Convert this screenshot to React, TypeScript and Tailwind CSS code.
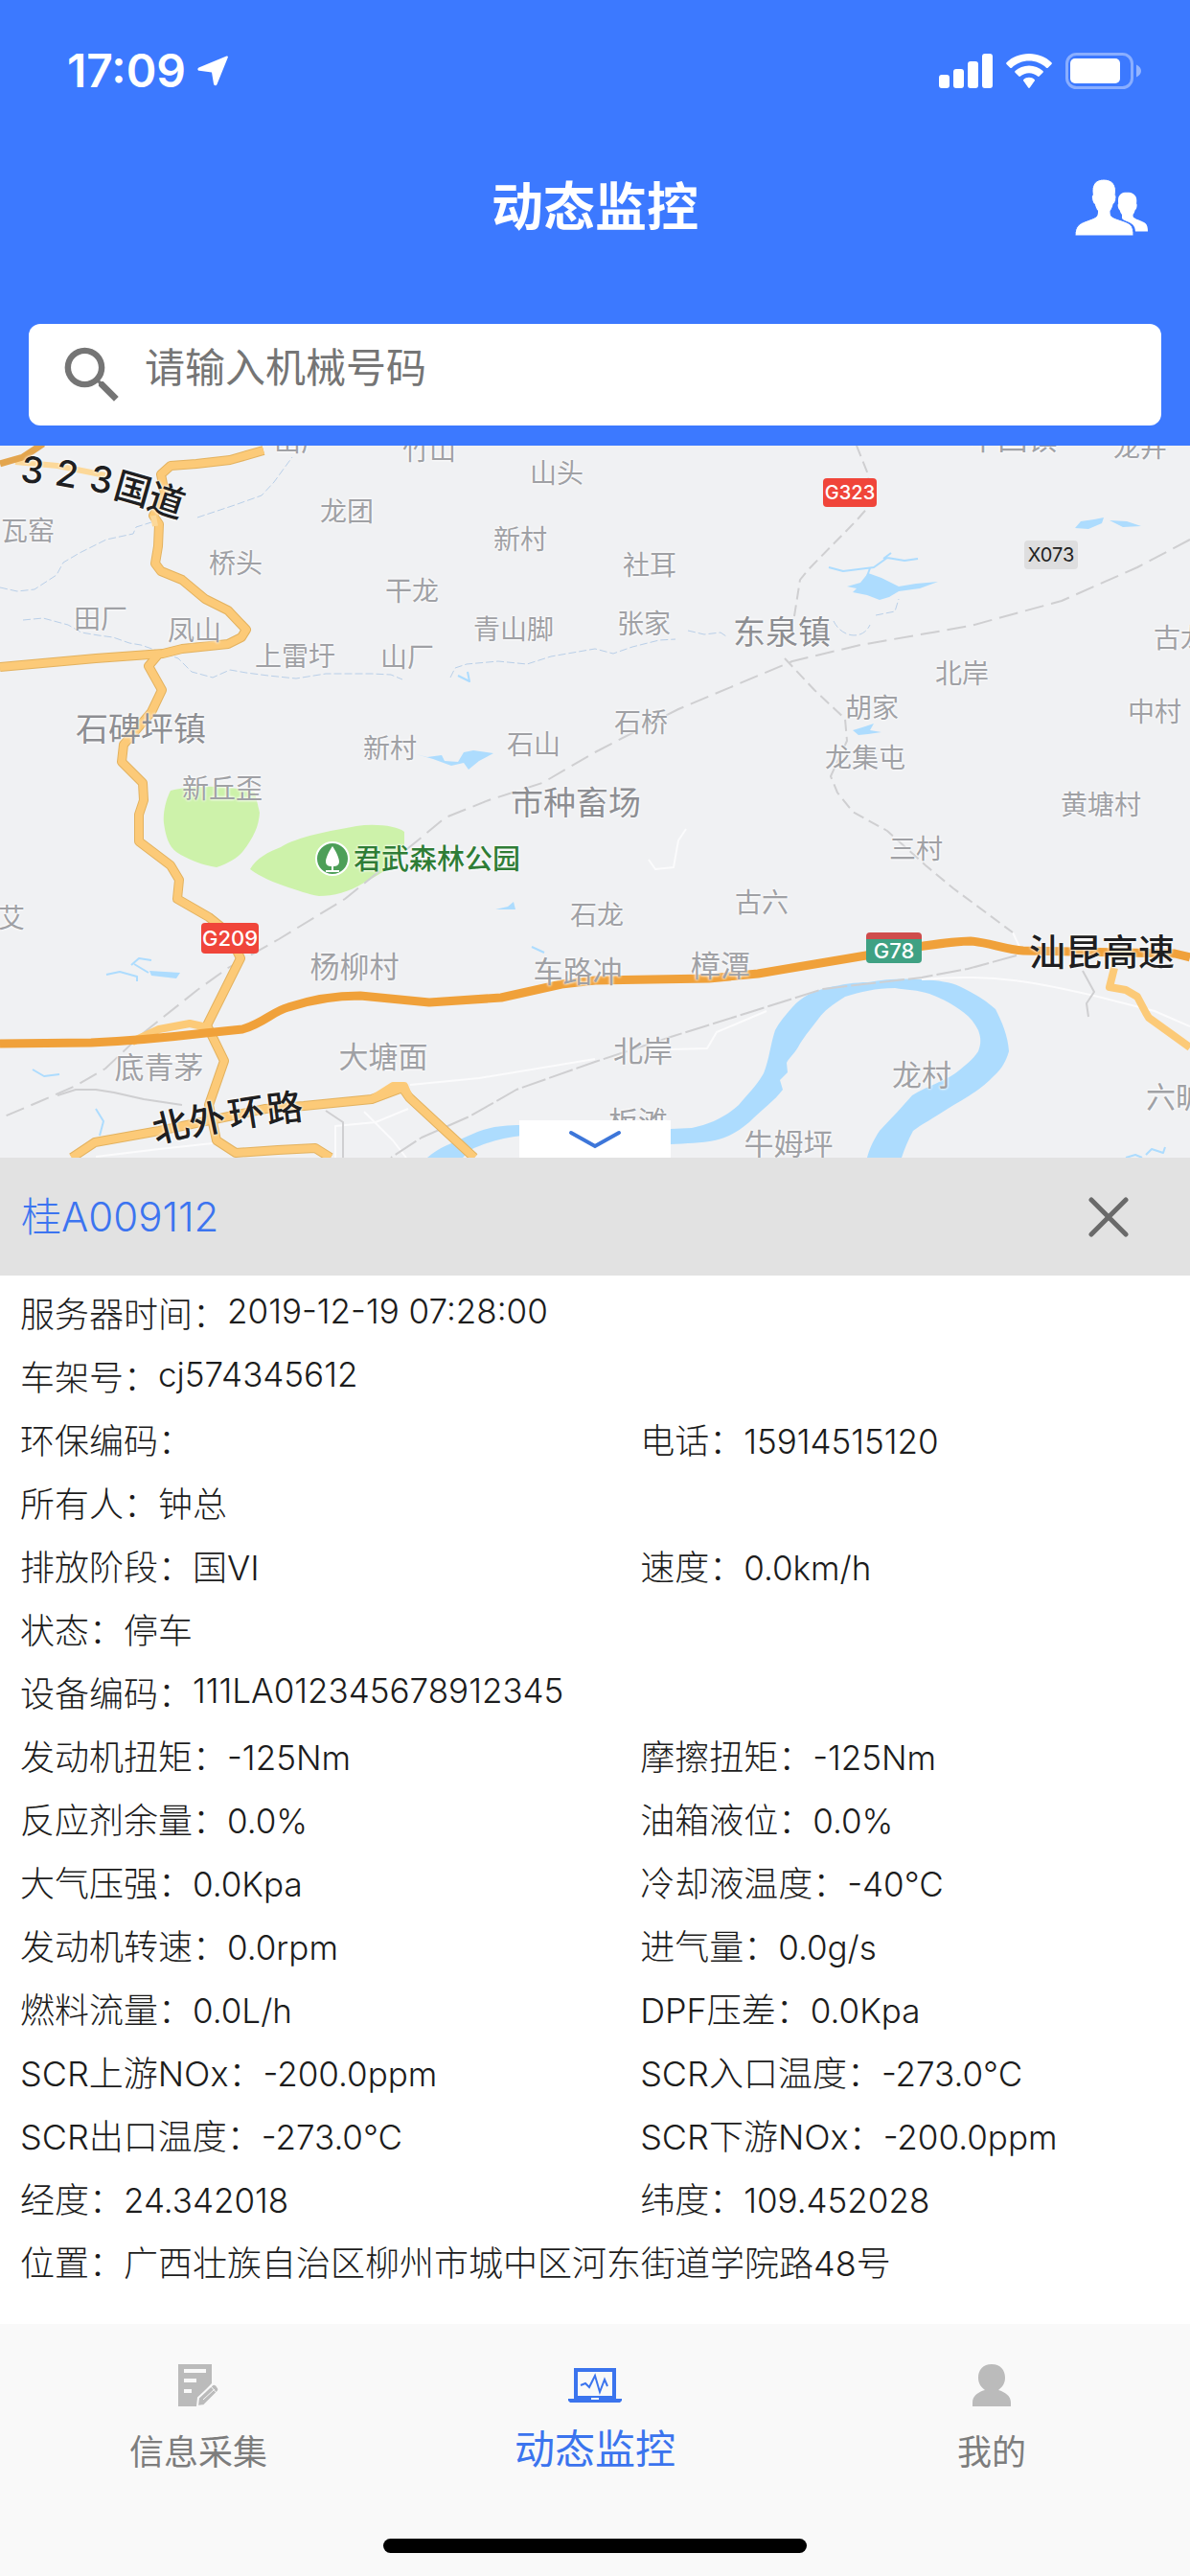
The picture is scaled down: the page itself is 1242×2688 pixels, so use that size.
import React from 'react';
import { MdSearch } from 'react-icons/md';

type LabelSize = 'sm' | 'md' | 'lg' | 'road' | 'park';

interface MapLabel {
  text: string;
  x: number;
  y: number;
  size?: LabelSize;
  rotate?: number;
}

interface Field {
  label: string;
  value: string;
  raised?: boolean;
}

const MAP_WIDTH = 1242;
const MAP_HEIGHT = 743;

const mapLabels: MapLabel[] = [
  { text: '山厂', x: 314, y: -4 },
  { text: '竹山', x: 448, y: 5 },
  { text: '中回镇', x: 1057, y: -8, size: 'md' },
  { text: '龙井', x: 1190, y: 2 },
  { text: '山头', x: 581, y: 29 },
  { text: '龙团', x: 362, y: 69 },
  { text: '瓦窑', x: 29, y: 89 },
  { text: '新村', x: 543, y: 98 },
  { text: '桥头', x: 246, y: 123 },
  { text: '社耳', x: 678, y: 125 },
  { text: '干龙', x: 430, y: 152 },
  { text: '田厂', x: 105, y: 181 },
  { text: '凤山', x: 203, y: 193 },
  { text: '张家', x: 672, y: 186 },
  { text: '青山脚', x: 536, y: 192 },
  { text: '东泉镇', x: 816, y: 195, size: 'lg' },
  { text: '古龙', x: 1232, y: 201 },
  { text: '上雷圩', x: 308, y: 220 },
  { text: '山厂', x: 425, y: 221 },
  { text: '北岸', x: 1004, y: 238 },
  { text: '胡家', x: 910, y: 274 },
  { text: '中村', x: 1205, y: 278 },
  { text: '石桥', x: 669, y: 289 },
  { text: '石碑坪镇', x: 147, y: 296, size: 'lg' },
  { text: '石山', x: 557, y: 312 },
  { text: '新村', x: 407, y: 316 },
  { text: '龙集屯', x: 903, y: 326 },
  { text: '新丘歪', x: 232, y: 358 },
  { text: '市种畜场', x: 601, y: 373, size: 'lg' },
  { text: '黄塘村', x: 1149, y: 375 },
  { text: '三村', x: 956, y: 421 },
  { text: '君武森林公园', x: 456, y: 431, size: 'park' },
  { text: '古六', x: 795, y: 477 },
  { text: '石龙', x: 623, y: 490 },
  { text: '艾', x: 12, y: 493 },
  { text: '樟潭', x: 752, y: 542, size: 'md' },
  { text: '杨柳村', x: 370, y: 543, size: 'md' },
  { text: '车路冲', x: 603, y: 548, size: 'md' },
  { text: '北岸', x: 671, y: 631, size: 'md' },
  { text: '大塘面', x: 400, y: 637, size: 'md' },
  { text: '底青茅', x: 166, y: 648, size: 'md' },
  { text: '龙村', x: 962, y: 656, size: 'md' },
  { text: '六旷', x: 1227, y: 679, size: 'md' },
  { text: '板滩', x: 666, y: 705, size: 'md' },
  { text: '牛姆坪', x: 823, y: 728, size: 'md' },
  { text: '3', x: 34, y: 25, size: 'road', rotate: 8 },
  { text: '2', x: 70, y: 29, size: 'road', rotate: 10 },
  { text: '3', x: 106, y: 35, size: 'road', rotate: 12 },
  { text: '国', x: 139, y: 45, size: 'road', rotate: 16 },
  { text: '道', x: 174, y: 57, size: 'road', rotate: 18 },
  { text: '汕昆高速', x: 1150, y: 528, size: 'road' },
  { text: '北', x: 178, y: 710, size: 'road', rotate: -14 },
  { text: '外', x: 216, y: 703, size: 'road', rotate: -12 },
  { text: '环', x: 257, y: 696, size: 'road', rotate: -9 },
  { text: '路', x: 297, y: 691, size: 'road', rotate: -7 },
];

const labelClasses: Record<LabelSize, string> = {
  sm: 'text-[28px] text-[#a0a1a5]',
  md: 'text-[31px] text-[#a0a1a5]',
  lg: 'text-[34px] text-[#8d8e92]',
  road: 'text-[38px] font-medium text-[#1f1f21]',
  park: 'text-[29px] font-medium text-[#2f7d36]',
};

const fieldRows: Field[][] = [
  [{ label: '服务器时间', value: '2019-12-19 07:28:00', raised: true }],
  [{ label: '车架号', value: 'cj574345612', raised: true }],
  [{ label: '环保编码', value: '' }, { label: '电话', value: '15914515120' }],
  [{ label: '所有人', value: '钟总' }],
  [{ label: '排放阶段', value: '国VI' }, { label: '速度', value: '0.0km/h' }],
  [{ label: '状态', value: '停车' }],
  [{ label: '设备编码', value: '111LA012345678912345', raised: true }],
  [{ label: '发动机扭矩', value: '-125Nm' }, { label: '摩擦扭矩', value: '-125Nm' }],
  [{ label: '反应剂余量', value: '0.0%' }, { label: '油箱液位', value: '0.0%' }],
  [{ label: '大气压强', value: '0.0Kpa' }, { label: '冷却液温度', value: '-40°C' }],
  [{ label: '发动机转速', value: '0.0rpm' }, { label: '进气量', value: '0.0g/s' }],
  [{ label: '燃料流量', value: '0.0L/h' }, { label: 'DPF压差', value: '0.0Kpa' }],
  [{ label: 'SCR上游NOx', value: '-200.0ppm' }, { label: 'SCR入口温度', value: '-273.0°C' }],
  [{ label: 'SCR出口温度', value: '-273.0°C' }, { label: 'SCR下游NOx', value: '-200.0ppm' }],
  [{ label: '经度', value: '24.342018' }, { label: '纬度', value: '109.452028' }],
  [{ label: '位置', value: '广西壮族自治区柳州市城中区河东街道学院路48号' }],
];

const place = (x: number, y: number) => ({
  left: `${(x / MAP_WIDTH) * 100}%`,
  top: `${(y / MAP_HEIGHT) * 100}%`,
});

const hasHan = (text: string) => /[\u4e00-\u9fff]/.test(text);

function StatusBar() {
  return (
    <div className="flex h-[148px] items-center justify-between pl-[70px] pr-[51px] text-white">
      <div className="flex items-center gap-3">
        <span className="text-[48px] leading-none font-semibold">17:09</span>
        <svg className="h-8 w-8" viewBox="0 0 32 32" fill="currentColor">
          <path d="M30.500 0.500c1-.4 1.700.4 1.300 1.400L20.500 30c-.8 1.800-3.200 1.600-3.500-.4L15 17.500 2 15.800C0 15.500-.2 13.400 1.500 12.600z" />
        </svg>
      </div>
      <div className="flex items-center gap-[14px]">
        <svg className="h-9 w-14" viewBox="0 0 56 36" fill="currentColor">
          <rect x="0" y="22" width="11" height="14" rx="3" />
          <rect x="15" y="16" width="11" height="20" rx="3" />
          <rect x="30" y="8" width="11" height="28" rx="3" />
          <rect x="45" y="0" width="11" height="36" rx="3" />
        </svg>
        <svg className="h-9 w-12" viewBox="0 0 48 36" fill="currentColor">
          <path d="M24 0C14.800 0 6.400 3.500 0.500 9.200c-.5.5-.5 1.200 0 1.700l3.800 3.800c.5.5 1.200.5 1.700 0C10.700 10.300 17 7.600 24 7.600s13.300 2.700 18 7.100c.5.5 1.200.5 1.700 0l3.800-3.800c.5-.5.5-1.200 0-1.700C41.600 3.500 33.200 0 24 0z" />
          <path d="M24 12.500c-5.600 0-10.700 2.100-14.500 5.600-.5.500-.5 1.200 0 1.700l3.800 3.800c.5.5 1.200.5 1.700 0 2.400-2.100 5.500-3.400 9-3.400s6.600 1.300 9 3.400c.5.5 1.200.5 1.700 0l3.800-3.800c.5-.5.5-1.200 0-1.700-3.800-3.500-8.900-5.600-14.500-5.600z" />
          <path d="M24 24.800c-2.200 0-4.200.8-5.700 2.100-.5.5-.5 1.200 0 1.700l4.900 6.900c.4.500 1.200.5 1.600 0l4.900-6.900c.5-.5.5-1.200 0-1.700-1.500-1.300-3.500-2.100-5.700-2.100z" />
        </svg>
        <svg className="h-[38px] w-[79px]" viewBox="0 0 79 38" fill="none">
          <rect x="1.500" y="1.500" width="68" height="35" rx="10" stroke="white" strokeOpacity="0.4" strokeWidth="3" />
          <rect x="5" y="6" width="52" height="26" rx="5" fill="white" />
          <path d="M74 12.500c3 1.200 5 3.700 5 6.500s-2 5.300-5 6.500z" fill="white" fillOpacity="0.45" />
        </svg>
      </div>
    </div>
  );
}

function Header() {
  return (
    <header className="bg-[#3c79ff] pb-[21px]">
      <StatusBar />
      <div className="grid h-[138px] grid-cols-[1fr_auto_1fr] items-center">
        <h1 className="col-start-2 text-[54px] leading-none font-bold text-white">动态监控</h1>
        <button className="mr-11 cursor-pointer justify-self-end text-white" aria-label="联系人">
          <svg className="h-[60px] w-[76px]" viewBox="0 0 76 60" fill="currentColor">
            <path d="M54 13.500c-5.500 0-9 3-9 8.500 0 1.200 0 2.400.2 3.500-.7.5-.6 2-.3 3.500.4 1.600.9 2.900 1.700 3.200.5 2 1.300 3.600 2.400 4.800v3c0 1.400.8 2 1.800 2.500 3.500 2 7 2.500 9.500 5 1.700 1.700 2.500 4 2.700 7H76c0-3.500-.5-6.500-2.300-8.200-3-2.800-9.200-3.800-12.400-6.300-.7-.8-.8-1.500-.8-3 1-1.200 1.700-2.800 2.200-4.800.9-.3 1.400-1.600 1.700-3.200.3-1.500.4-3-.3-3.500.2-1.100.2-2.300.2-3.500 0-5.500-4.300-8.500-10.300-8.500z" />
            <path
              stroke="#3c79ff"
              strokeWidth="1"
              d="M30 0c-7.500 0-12 4.500-12 12 0 1.500.1 3 .3 4.500-1 .5-1 2.500-.5 5 .4 2 1.200 4 2.400 4.300.8 3 1.800 5.500 3.300 7.200 0 3-.2 4.800-1.500 6C18 42 8 43.500 3.500 48 1 50.500 0 54 0 59h61c0-5-.5-9-3-11.500C53.500 43.500 43 42 38.500 39c-1.300-1.200-1.500-3-1.500-6 1.500-1.700 2.500-4.200 3.200-7.200 1.200-.3 2-2.300 2.400-4.300.5-2.500.5-4.500-.4-5 .2-1.500.3-3 .3-4.500C42.500 4.500 37.500 0 30 0z"
            />
          </svg>
        </button>
      </div>
      <div className="px-[30px] pt-[52px]">
        <label className="flex h-[106px] items-center gap-4 rounded-xl bg-white pl-7">
          <MdSearch className="h-[77px] w-[77px] shrink-0 text-[#757575]" />
          <input
            type="text"
            aria-label="机械号码"
            placeholder="请输入机械号码"
            className="w-full pb-4 text-[42px] text-[#333] outline-none placeholder:text-[#757575]"
          />
        </label>
      </div>
    </header>
  );
}

function MapDrawing() {
  return (
    <svg
      className="absolute inset-0 h-full w-full"
      viewBox="0 0 1242 743"
      preserveAspectRatio="none"
      fill="none"
      strokeLinejoin="round"
    >
      {/* parks */}
      <g fill="#cdf2aa">
        <path d="M178 360C172 372 170 385 171 394C173 408 176 418 184 424C196 432 212 438 226 440C238 436 248 430 253 424C264 410 270 398 271 383L266 362C240 354 200 354 178 360Z" />
        <path d="M261 442C268 430 280 424 293 419C310 408 345 402 372 397C392 394 415 397 422 403V425C412 438 396 448 380 456C364 466 348 470 333 470C320 468 312 464 301 461C286 456 272 450 261 442Z" />
      </g>

      {/* water */}
      <g fill="#addcfe">
        <path d="M700 713L722 712C742 708 758 700 771 688C785 672 792 664 797 655C803 640 804 625 809 610C813 602 820 594 827 586C838 574 848 570 862 566C880 562 892 560 906 560C925 556 945 556 962 557C980 558 992 560 1001 564C1018 572 1030 580 1039 588C1046 602 1052 616 1053 632C1050 642 1046 650 1037 658C1024 672 1006 682 989 692C974 702 962 708 953 715C948 724 944 734 941 743H905C908 732 912 724 918 715C930 702 940 692 952 678C968 668 984 664 997 655C1008 646 1016 640 1021 632C1024 624 1024 618 1021 610C1016 600 1010 594 1001 588C990 580 980 576 970 572C958 568 946 568 934 566C914 566 898 570 882 575C868 584 860 590 855 597C848 606 840 616 835 624C830 634 824 638 821 644L822 654L814 662L817 672C808 684 796 692 782 706C770 716 760 722 746 725C732 728 716 728 700 729Z" />
        <path d="M446 743C458 732 472 728 487 721C505 712 520 709 545 709V720C525 722 505 728 491 735L483 743Z" />
        <path d="M884 147L898 143L906 133L920 138L938 147L956 144L979 142L960 149L938 152L928 158L918 161L905 156L890 153L894 149Z" />
        <path d="M1122 86L1128 79L1142 77L1152 75L1150 81L1136 87Z" />
        <path d="M1158 78L1176 79L1191 84L1172 85Z" />
        <path d="M434 322L446 325L461 323L464 329L478 330L484 320L494 318L515 321L500 329L489 338L484 331L471 334L452 327Z" />
        <path d="M890 297L900 294L912 290L908 297L920 299L906 301L896 302Z" />
        <path d="M156 548L188 550L184 556L158 553ZM517 484L530 481L536 476L538 484Z" />
      </g>
      <g stroke="#addcfe" strokeWidth="2">
        <path d="M865 127L880 131L912 127L926 117L944 120L958 118M908 128L905 136M922 118L930 112" />
        <path d="M111 552L125 549L143 554V559M137 542L145 535L158 537M155 550L140 541M34 651L46 658L62 656M100 692L108 705L104 720" />
        <path d="M478 240L490 246L488 236M555 523L568 529M1175 743L1185 740L1192 743M1196 740L1202 734L1214 738L1216 732" />
      </g>
      <g stroke="#b9cfe8" strokeWidth="1" strokeDasharray="8 3">
        <path d="M0 148L18 152L36 150L59 135L66 122L83 112L111 98L139 92L142 85L158 80M206 75L245 62L273 52L286 38L305 12" />
        <path d="M24 182L45 180L71 187L85 195L103 198L118 200L135 206L147 208L170 216L186 222L200 236L222 242L240 234L257 237L280 240L309 243L340 238L388 238L408 239L420 244" />
        <path d="M470 242L475 232L487 228L520 225L550 228L575 220L621 212L640 217L660 210L688 203L705 202M718 193L735 197L752 195L758 199M870 183C878 200 900 204 908 187M914 177L934 173L938 160" />
      </g>

      {/* minor roads and railways */}
      <g stroke="#fbfbfc" strokeWidth="2">
        <path d="M677 432L684 442L703 440L708 412L716 400M428 667L500 660L621 640M1057 508L1065 525M962 557C1040 550 1090 562 1142 574L1205 590L1242 606" />
        <path d="M350 743V710L392 706L426 692M380 695L410 725L424 743M700 630L738 629L748 612L800 590" />
        <path d="M100 742L166 734L222 728M166 640L200 645" />
      </g>
      <g stroke="#cfcfd1" strokeWidth="2">
        <path strokeDasharray="12 6" d="M894 0L906 30L908 62L894 78L843 130L835 140L829 178M819 222L850 255L882 285L884 308L867 345L874 362L890 382L926 402L966 438L995 462L1057 508" />
        <path strokeDasharray="20 8" d="M1242 98L1187 127L1108 162L1013 188L898 208L827 225L708 275L621 320L566 352L510 370L465 388L436 412L360 473L291 515L238 545L206 568L147 615L110 650L79 668L40 685L0 702" />
        <path strokeDasharray="26 4" d="M1061 532L1010 546L962 555L859 567L780 592L700 617L621 643L539 672L490 700L440 722L408 743" />
        <path d="M60 678L79 672L100 672L119 675L150 682L190 688M340 694L358 706V743M1130 548L1142 570L1134 582L1136 596" />
      </g>

      {/* national roads */}
      <g stroke="#e3b25f" strokeWidth="10">
        <path d="M275 5L240 15L205 19L178 21L168 30L172 50L160 73L166 82L165 105L162 123L168 131L190 140L214 160L238 172L257 192L252 200L238 207L190 212L170 217L100 222L0 231" />
        <path d="M166 217L155 230L169 255L158 278L129 312L127 330L149 352L150 370L145 385V413L178 438L187 453L185 473L218 492L238 508L251 535L216 605L234 642L218 688L226 725L246 738L290 735L329 733L345 743" />
        <path d="M75 743L99 727L166 715L277 692L317 689L388 682L420 670L427 680L495 743" />
      </g>
      <g stroke="#fcca78" strokeWidth="8">
        <path d="M275 5L240 15L205 19L178 21L168 30L172 50L160 73L166 82L165 105L162 123L168 131L190 140L214 160L238 172L257 192L252 200L238 207L190 212L170 217L100 222L0 231" />
        <path d="M166 217L155 230L169 255L158 278L129 312L127 330L149 352L150 370L145 385V413L178 438L187 453L185 473L218 492L238 508L251 535L216 605L234 642L218 688L226 725L246 738L290 735L329 733L345 743" />
        <path d="M75 743L99 727L166 715L277 692L317 689L388 682L420 670L427 680L495 743" />
        <path d="M388 682L410 668H422L427 680M138 622L166 609L198 603L216 607M1163 545L1158 565L1175 568L1187 575L1196 592L1199 597L1242 628" />
      </g>
      <path stroke="#fcd899" strokeWidth="6" d="M16 17L60 21L110 31M160 73L162 84" />
      <path stroke="#e3a54e" strokeWidth="7" d="M45 -2L24 12L0 19" />

      {/* expressway */}
      <path
        stroke="#f0a13a"
        strokeWidth="9"
        d="M0 624L95 623C140 621 180 617 214 613L253 609C275 603 285 590 301 586C325 578 350 574 376 574L448 581L523 576L586 562L621 558L740 556L791 551L898 533C940 526 980 518 1013 517C1030 518 1050 526 1068 527L1226 530L1242 534"
      />

      {/* park pin */}
      <circle cx="347" cy="431" r="17" fill="#4d9f58" stroke="#ffffff" strokeWidth="2" />
      <path
        fill="#ffffff"
        d="M347 418C344 422 340 430 340 434C340 438 343 439 346 439V443H340V445H354V443H348V439C351 439 354 438 354 434C354 430 350 422 347 418Z"
      />
    </svg>
  );
}

function MapView() {
  return (
    <section className="relative aspect-[1242/743] overflow-hidden bg-[#f0f1f3]" aria-label="地图">
      <MapDrawing />
      {mapLabels.map((item, index) => (
        <span
          key={index}
          className={`absolute leading-none whitespace-nowrap [text-shadow:0_0_3px_#fff,0_0_3px_#fff] ${labelClasses[item.size ?? 'sm']}`}
          style={{ ...place(item.x, item.y), transform: `translate(-50%, -50%) rotate(${item.rotate ?? 0}deg)` }}
        >
          {item.text}
        </span>
      ))}
      <span
        className="absolute flex h-[30px] w-14 items-center justify-center rounded-sm bg-[#f0453a] text-[20px] font-medium text-white"
        style={place(859, 34)}
      >
        G323
      </span>
      <span
        className="absolute flex h-[30px] w-14 items-center justify-center rounded-sm bg-[#dededf] text-[20px] text-[#222]"
        style={place(1069, 99)}
      >
        X073
      </span>
      <span
        className="absolute flex h-8 w-[60px] items-center justify-center rounded-sm bg-[#f0453a] text-[22px] font-medium text-white"
        style={place(210, 498)}
      >
        G209
      </span>
      <span
        className="absolute flex h-8 w-[58px] items-center justify-center rounded-sm border-t-[7px] border-[#cf4c4c] bg-[#3fa183] text-[22px] font-medium text-white"
        style={place(904, 508)}
      >
        G78
      </span>
      <button
        className="absolute bottom-0 left-1/2 flex h-[39px] w-[158px] -translate-x-1/2 cursor-pointer items-center justify-center bg-white"
        aria-label="收起"
      >
        <svg className="h-5 w-14" viewBox="0 0 56 20" fill="none" stroke="#3d76d9" strokeWidth="4" strokeLinecap="round">
          <path d="M3 3L28 17L53 3" />
        </svg>
      </button>
    </section>
  );
}

function FieldItem({ label, value, raised }: Field) {
  return (
    <div className="flex h-[66px] items-start whitespace-nowrap">
      <dt>{label}：</dt>
      <dd className={`${raised ? 'leading-[58px]' : ''} ${hasHan(value) ? '' : 'text-[35px]'}`}>{value}</dd>
    </div>
  );
}

function VehiclePanel() {
  return (
    <section className="flex-1 bg-white">
      <div className="flex h-[123px] items-center justify-between bg-[#e2e2e2] pr-16 pl-[22px]">
        <h2 className="text-[42px] leading-none font-light text-[#3c74f0]">桂A009112</h2>
        <button className="cursor-pointer text-[#6a6a6a]" aria-label="关闭">
          <svg className="h-[42px] w-[42px]" viewBox="0 0 42 42" fill="none" stroke="currentColor" strokeWidth="5" strokeLinecap="round">
            <path d="M3 3L39 39M39 3L3 39" />
          </svg>
        </button>
      </div>
      <dl className="pt-2 pb-[30px] pl-[21px] text-[36px] leading-[66px] font-light text-[#1c1c1c]">
        {fieldRows.map((row) => (
          <div key={row[0].label} className={row.length > 1 ? 'grid grid-cols-[53fr_47fr]' : ''}>
            {row.map((field) => (
              <FieldItem key={field.label} {...field} />
            ))}
          </div>
        ))}
      </dl>
    </section>
  );
}

function TabItem({
  label,
  active = false,
  children
}: {
  label: string;
  active?: boolean;
  children: React.ReactNode;
}) {
  return (
    <a
      href="#"
      aria-current={active ? 'page' : undefined}
      className={`flex flex-1 flex-col items-center ${active ? 'text-[#3b74ee]' : 'text-[#7d7d7d]'}`}
    >
      <span className="flex h-11 items-center">{children}</span>
      <span className={`flex h-24 items-center ${active ? 'pb-2 text-[42px]' : 'text-[36px]'}`}>{label}</span>
    </a>
  );
}

function TabBar() {
  return (
    <footer className="bg-[#f9f9f9]">
      <nav className="flex pt-[42px]">
        <TabItem label="信息采集">
          <svg className="h-11 w-[43px]" viewBox="0 0 43 44">
            <path fill="#bbbbbb" d="M0 0H35V20L20 36V44H0Z" />
            <path fill="#f9f9f9" d="M6 5H29V9H6ZM6 15H19V19H6ZM6 26H14V30H6Z" />
            <path fill="#bbbbbb" d="M21 35L36 21Q38 20 40 22L42 25Q43 27 41 29L27 43L20 44Z" stroke="#f9f9f9" strokeWidth="2" />
            <path d="M26 37L38 26M34 23L40 30" stroke="#f9f9f9" strokeWidth="1" />
          </svg>
        </TabItem>
        <TabItem label="动态监控" active>
          <svg className="h-9 w-14" viewBox="0 0 56 36" fill="none" stroke="currentColor">
            <path strokeWidth="4" d="M8 30V2H48V30" />
            <path fill="currentColor" stroke="none" d="M6 29H50V32H56V34L54 36H2L0 34V32H6Z" />
            <path stroke="#f9f9f9" strokeWidth="2" d="M24 32H32" />
            <path strokeWidth="2" d="M13 18L18 16L22 20L28 8L33 25L38 12L41 19" />
          </svg>
        </TabItem>
        <TabItem label="我的">
          <svg className="h-11 w-10" viewBox="0 0 40 44" fill="#bbbbbb">
            <path d="M20 0C11 0 6 6 6 14C6 20 9 24 13 27C6 29 0 33 0 40V44H40V40C40 33 34 29 27 27C31 24 34 20 34 14C34 6 29 0 20 0Z" />
          </svg>
        </TabItem>
      </nav>
      <div className="flex justify-center pt-[42px] pb-6">
        <span className="h-[15px] w-[442px] rounded-full bg-black" />
      </div>
    </footer>
  );
}

export default function App() {
  return (
    <div className="flex min-h-screen flex-col bg-white font-['Inter','Noto_Sans_CJK_SC',sans-serif]">
      <Header />
      <MapView />
      <VehiclePanel />
      <TabBar />
    </div>
  );
}
